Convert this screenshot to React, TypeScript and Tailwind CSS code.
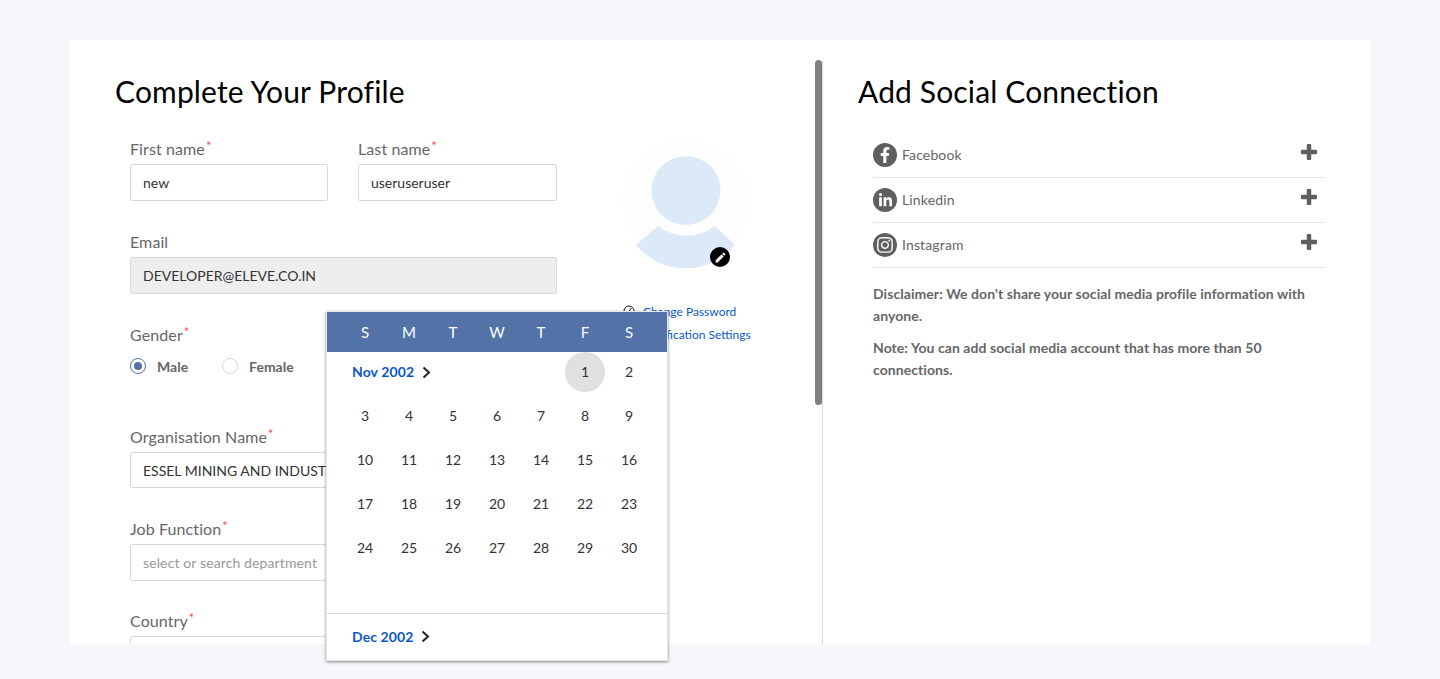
import React from "react";
import { FaFacebookF, FaLinkedinIn, FaInstagram } from "react-icons/fa";
import { MdEdit } from "react-icons/md";

const Label = ({ text, req = true }: { text: string; req?: boolean }) => (
  <div className="h-[18px] flex items-center text-[16px] leading-[18px] tracking-[0.1px] text-[#666666]">
    {text}
    {req && <span className="text-[#ff4d4d] text-[13px] self-start -mt-[3px] ml-[1px]">*</span>}
  </div>
);

const Input = ({ value, ph, cls = "h-[37px]" }: { value?: string; ph?: string; cls?: string }) => (
  <div className={`mt-[6px] border border-[#d9d9d9] rounded-[2px] px-3 flex items-center text-[14px] whitespace-nowrap overflow-hidden ${value ? "text-[#333333]" : "text-[#999999] tracking-[0.12px]"} ${cls}`}>
    {value ?? ph}
  </div>
);

const Chevron = () => (
  <svg width="9" height="13" viewBox="0 0 9 13" fill="none" stroke="#222222" strokeWidth="2">
    <path d="M1.5 1.5 L7 6.5 L1.5 11.5" />
  </svg>
);

const Plus = () => (
  <svg width="16" height="16" viewBox="0 0 16 16" fill="#5f5f5f" className="-mt-[6px] mr-[8px]">
    <rect x="5.75" y="0" width="4.5" height="16" rx="1" />
    <rect x="0" y="5.75" width="16" height="4.5" rx="1" />
  </svg>
);

const social = [
  { name: "Facebook", Icon: FaFacebookF, size: 16 },
  { name: "Linkedin", Icon: FaLinkedinIn, size: 15 },
  { name: "Instagram", Icon: FaInstagram, size: 18 },
];

const days: number[][] = [
  [3, 4, 5, 6, 7, 8, 9],
  [10, 11, 12, 13, 14, 15, 16],
  [17, 18, 19, 20, 21, 22, 23],
  [24, 25, 26, 27, 28, 29, 30],
];

export default function App() {
  return (
    <div className="relative h-[679px] overflow-hidden bg-[#f5f7fb] pt-10 px-[70px] font-['Lato','Open_Sans',sans-serif]">
      <div className="h-[604px] bg-white flex overflow-hidden">
        {/* Left */}
        <div className="relative w-[753px] shrink-0 pl-[45px] overflow-hidden">
          <div className="absolute right-0 top-5 bottom-0 w-px bg-[#d9d9d9]" />
          <div className="absolute right-[1px] top-5 w-[7px] h-[345px] rounded-[4px] bg-[#808080]" />
          <h1 className="mt-[31px] h-[40px] text-[30px] leading-[40px] tracking-[0.15px] text-black">Complete Your Profile</h1>
          <div className="flex mt-[29px]">
            <div className="w-[427px] ml-[15px] shrink-0">
              <div className="flex gap-[30px]">
                <div className="w-[198px]">
                  <Label text="First name" />
                  <Input value="new" />
                </div>
                <div className="w-[199px]">
                  <Label text="Last name" />
                  <Input value="useruseruser" />
                </div>
              </div>
              <div className="mt-[32px]">
                <Label text="Email" req={false} />
                <Input value="DEVELOPER@ELEVE.CO.IN" cls="h-[37px] bg-[#eeeeee]" />
              </div>
              <div className="mt-[32px]">
                <Label text="Gender" />
                <div className="flex items-center mt-[13px] h-[18px] text-[14px] font-bold text-[#666666]">
                  <span className="w-4 h-4 rounded-full border border-[#5373a8] flex items-center justify-center">
                    <span className="w-2 h-2 rounded-full bg-[#5373a8]" />
                  </span>
                  <span className="ml-[11px]">Male</span>
                  <span className="ml-[34px] w-4 h-4 rounded-full border border-[#d9d9d9]" />
                  <span className="ml-[11px]">Female</span>
                </div>
              </div>
              <div className="mt-[53px]">
                <Label text="Organisation Name" />
                <Input value="ESSEL MINING AND INDUSTRIES LTD" cls="h-[36px]" />
              </div>
              <div className="mt-[32px]">
                <Label text="Job Function" />
                <Input ph="select or search department" />
              </div>
              <div className="mt-[31px]">
                <Label text="Country" />
                <Input ph="" />
              </div>
            </div>
            <div className="ml-[65px] w-[128px] shrink-0 relative -mt-[2px]">
              <div className="relative w-[128px] h-[130px]">
                <svg width="128" height="130" viewBox="0 0 128 130">
                  <circle cx="64" cy="65" r="64" fill="#fefeff" />
                  <circle cx="64" cy="52.5" r="34.5" fill="#dbe9f9" />
                  <path d="M14 107 L36 88 A 47 47 0 0 0 93 88 L113 107 A 64 64 0 0 1 14 107 Z" fill="#dbe9f9" />
                </svg>
                <div className="absolute left-[88px] top-[109px] w-5 h-5 rounded-full bg-black flex items-center justify-center text-white">
                  <MdEdit size={13} />
                </div>
              </div>
              <div className="mt-[36px] flex items-center h-4 text-[12px] text-[#0b57c9] whitespace-nowrap">
                <svg width="12" height="12" viewBox="0 0 12 12" fill="none" stroke="#111111" strokeWidth="1" className="ml-[1px] mr-[8px] -mt-[2px] shrink-0">
                  <circle cx="6" cy="6" r="5" />
                  <path d="M6 6 L8.5 3" />
                </svg>
                Change Password
              </div>
              <div className="mt-[7px] flex items-center h-4 text-[12px] text-[#0b57c9] whitespace-nowrap pl-[21px]">
                Notification Settings
              </div>
            </div>
          </div>
        </div>
        {/* Right */}
        <div className="flex-1 pl-[35px] pr-[45px]">
          <h2 className="mt-[31px] h-[40px] text-[30px] leading-[40px] tracking-[0.15px] text-black">Add Social Connection</h2>
          <div className="ml-[15px] mt-[22px]">
            {social.map(({ name, Icon, size }) => (
              <div key={name} className="h-[45px] border-b border-[#e8e8e8] flex items-center justify-between">
                <div className="flex items-center gap-[5px]">
                  <span className="w-6 h-6 rounded-full bg-[#5f5f5f] flex items-center justify-center text-white">
                    <Icon size={size} />
                  </span>
                  <span className="text-[14px] leading-[22px] -mt-[1px] tracking-[0.14px] text-[#666666]">{name}</span>
                </div>
                <Plus />
              </div>
            ))}
            <p className="mt-[15px] text-[14px] leading-[22px] tracking-[0.06px] font-bold text-[#666666]">
              Disclaimer: We don't share your social media profile information with anyone.
            </p>
            <p className="mt-[10px] text-[14px] leading-[22px] tracking-[0.06px] font-bold text-[#666666]">
              Note: You can add social media account that has more than 50 connections.
            </p>
          </div>
        </div>
      </div>

      {/* Date picker popover */}
      <div className="absolute left-[326px] top-[311px] w-[342px] h-[350px] bg-white border border-[#e6e6e6] shadow-[0_1px_3px_rgba(0,0,0,0.45)]">
        <div className="h-10 bg-[#5373a8] px-4 grid grid-cols-7 text-[15px] text-white">
          {["S", "M", "T", "W", "T", "F", "S"].map((d, i) => (
            <span key={i} className="flex items-center justify-center">{d}</span>
          ))}
        </div>
        <div className="px-4 grid grid-cols-7 auto-rows-[40px] gap-y-1 text-[14px] text-[#333333]">
          <div className="col-span-5 flex items-center pl-[9px] gap-[8px]">
            <span className="text-[14px] font-bold tracking-[0.1px] text-[#0b57c9] -mt-[1px]">Nov 2002</span>
            <Chevron />
          </div>
          <span className="flex items-center justify-center">
            <span className="w-10 h-10 rounded-full bg-[#e0e0e0] flex items-center justify-center pb-[2px]">1</span>
          </span>
          <span className="flex items-center justify-center pb-[2px]">2</span>
          {days.flat().map((d) => (
            <span key={d} className="flex items-center justify-center pb-[2px]">{d}</span>
          ))}
        </div>
        <div className="mt-[45px] border-t border-[#d9d9d9] h-[47px] pl-[25px] pb-[2px] flex items-center gap-[8px]">
          <span className="text-[14px] font-bold tracking-[0.1px] text-[#0b57c9]">Dec 2002</span>
          <Chevron />
        </div>
      </div>
    </div>
  );
}
